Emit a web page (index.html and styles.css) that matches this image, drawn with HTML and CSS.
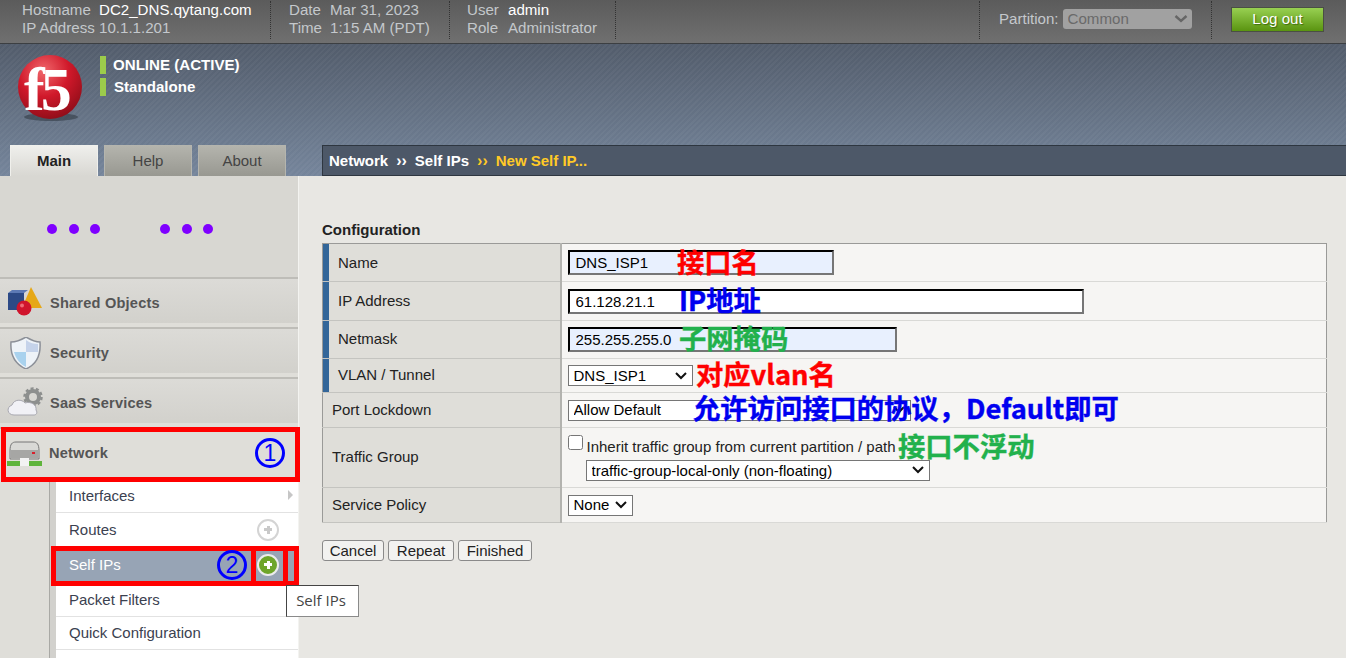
FILE: index.html
```html
<!DOCTYPE html>
<html>
<head>
    <meta charset="UTF-8">
    <title>Network » Self IPs » New Self IP...</title>
    <link rel="stylesheet" href="styles.css">
</head>
<body>
<div class="page">
    <div class="topbar">
        <div class="info info-host">
            <span>Hostname</span><b>DC2_DNS.qytang.com</b>
            <span>IP Address</span><span>10.1.1.201</span>
        </div>
        <div class="info info-date">
            <span>Date</span><span>Mar 31, 2023</span>
            <span>Time</span><span>1:15 AM (PDT)</span>
        </div>
        <div class="info info-user">
            <span>User</span><b>admin</b>
            <span>Role</span><span>Administrator</span>
        </div>
        <div class="top-spacer"></div>
        <div class="partition">
            <span>Partition:</span>
            <select class="partition-select" disabled><option>Common</option></select>
        </div>
        <div class="logout-wrap"><button class="logout">Log out</button></div>
    </div>

    <div class="banner">
        <div class="banner-top">
            <svg class="logo" width="72" height="72" viewBox="0 0 72 72">
                <defs>
                    <radialGradient id="ball" cx="40%" cy="25%" r="80%">
                        <stop offset="0" stop-color="#f0676b"/>
                        <stop offset=".5" stop-color="#d0182a"/>
                        <stop offset="1" stop-color="#8c0d18"/>
                    </radialGradient>
                </defs>
                <ellipse cx="33" cy="62" rx="27" ry="4" fill="#2e3640" opacity=".55"/>
                <circle cx="32" cy="32" r="32" fill="url(#ball)"/>
                <text class="logo-text" x="6" y="55">f5</text>
            </svg>
            <div class="status">
                <div class="status-line">ONLINE (ACTIVE)</div>
                <div class="status-line status-mode">Standalone</div>
            </div>
        </div>
        <div class="banner-nav">
            <div class="tab tab-on">Main</div>
            <div class="tab">Help</div>
            <div class="tab">About</div>
            <div class="crumbs">Network<i>››</i>Self IPs<i class="crumb-now">››</i><span class="crumb-now">New Self IP...</span></div>
        </div>
    </div>

    <div class="main">
        <div class="side">
            <div class="dots">
                <i></i><i></i><i></i><i></i><i></i><i></i>
            </div>
            <div class="sect">
                <svg class="sect-icon" width="36" height="32" viewBox="0 0 36 32">
                    <polygon points="24,0 35,21 15,21" fill="#e6a817"/>
                    <rect x="1" y="6" width="16" height="17" fill="#2d4a86"/>
                    <polygon points="1,6 5,3 21,3 17,6" fill="#5d7ab5"/>
                    <circle cx="17" cy="21" r="7.5" fill="#d0142c"/>
                    <circle cx="15" cy="18.5" r="2" fill="#ee6a76"/>
                </svg>
                <span>Shared Objects</span>
            </div>
            <div class="sect">
                <svg class="sect-icon" width="36" height="32" viewBox="0 0 36 32">
                    <path d="M19 0 C24 3 28 5 33 5 C34 18 30 27 19 32 C8 27 3 18 4 5 C9 5 14 3 19 0Z" fill="#eef3f8" stroke="#8c9098" stroke-width="1.5"/>
                    <path d="M19 3 L19 15 L31 15 C31 12 31 10 31 7 C27 7 23 6 19 3Z" fill="#c5d3ea"/>
                    <path d="M19 15 L7 15 C9 22 13 27 19 30Z" fill="#a9d2ee"/>
                </svg>
                <span>Security</span>
            </div>
            <div class="sect">
                <svg class="sect-icon" width="36" height="32" viewBox="0 0 36 32">
                    <circle cx="26" cy="10" r="6" fill="none" stroke="#8d8f8e" stroke-width="4"/>
                    <circle cx="26" cy="10" r="8.5" fill="none" stroke="#8d8f8e" stroke-width="2.5" stroke-dasharray="3 2.34"/>
                    <path d="M7 28 C0 28 -1 20 5 18 C7 12 15 12 18 16 C24 14 30 18 29 23 C31 26 29 28 27 28Z" fill="#f1f1f6" stroke="#a8a8b0"/>
                </svg>
                <span>SaaS Services</span>
            </div>
            <div class="sect sect-on">
                <svg class="sect-icon" width="35" height="32" viewBox="0 0 35 32">
                    <path d="M3 14 C3 7 5 5 9 5 H26 C30 5 32 7 32 14 V22 H3Z" fill="#d9d9d6" stroke="#777"/>
                    <rect x="4" y="13" width="27" height="8" fill="#a6a6a4"/>
                    <rect x="25" y="15" width="3" height="2" fill="#d8202c"/>
                    <rect x="0" y="24" width="35" height="5" fill="#5fb43c"/>
                    <rect x="13" y="21" width="9" height="8" fill="#f2f2f2"/>
                </svg>
                <span>Network</span>
            </div>
            <div class="sub">
                <div class="sub-list">
                    <div class="sub-item sub-first">Interfaces<i class="sub-arrow"></i></div>
                    <div class="sub-item sub-routes">Routes<i class="plus"></i></div>
                    <div class="sub-item sub-on">Self IPs<i class="plus plus-on"></i></div>
                    <div class="sub-item sub-packet">Packet Filters</div>
                    <div class="sub-item sub-quick">Quick Configuration</div>
                </div>
            </div>
        </div>

        <div class="content">
            <div class="cfg-title">Configuration</div>
            <table class="cfg">
                <tr class="row-name">
                    <td class="lbl lbl-req">Name</td>
                    <td><input class="field field-name" type="text" value="DNS_ISP1"></td>
                </tr>
                <tr class="row-ip">
                    <td class="lbl lbl-req">IP Address</td>
                    <td><input class="field field-ip" type="text" value="61.128.21.1"></td>
                </tr>
                <tr class="row-mask">
                    <td class="lbl lbl-req">Netmask</td>
                    <td><input class="field field-mask" type="text" value="255.255.255.0"></td>
                </tr>
                <tr class="row-vlan">
                    <td class="lbl lbl-req">VLAN / Tunnel</td>
                    <td><select class="pick pick-vlan"><option>DNS_ISP1</option></select></td>
                </tr>
                <tr class="row-port">
                    <td class="lbl">Port Lockdown</td>
                    <td><select class="pick pick-port"><option>Allow Default</option></select></td>
                </tr>
                <tr class="row-group">
                    <td class="lbl">Traffic Group</td>
                    <td>
                        <label class="inherit"><input class="check" type="checkbox"><span>Inherit traffic group from current partition / path</span></label>
                        <select class="pick pick-group"><option>traffic-group-local-only (non-floating)</option></select>
                    </td>
                </tr>
                <tr class="row-policy">
                    <td class="lbl">Service Policy</td>
                    <td><select class="pick pick-policy"><option>None</option></select></td>
                </tr>
            </table>
            <div class="actions">
                <button class="btn btn-cancel">Cancel</button>
                <button class="btn btn-repeat">Repeat</button>
                <button class="btn btn-finished">Finished</button>
            </div>
        </div>
    </div>

    <!-- things drawn on top of the screenshot -->
    <div class="mark mark-network"></div>
    <div class="mark mark-selfip"></div>
    <div class="mark-bar mark-bar-a"></div>
    <div class="mark-bar mark-bar-b"></div>
    <div class="num num-1">1</div>
    <div class="num num-2">2</div>
    <div class="tooltip">Self IPs</div>
    <div class="note red note-name">接口名</div>
    <div class="note blue note-ip">IP地址</div>
    <div class="note green note-mask">子网掩码</div>
    <div class="note red note-vlan">对应vlan名</div>
    <div class="note blue note-port">允许访问接口的协议，Default即可</div>
    <div class="note green note-group">接口不浮动</div>
</div>
</body>
</html>
```

FILE: styles.css
```css
* {
    box-sizing: border-box;
}

html, body {
    margin: 0;
    height: 100%;
    overflow: hidden;
}

body {
    font-family: "Liberation Sans", Arial, sans-serif;
    font-size: 15px;
    color: #222;
    background-color: #e8e7e3;
}

.page {
    position: relative;
    width: 1346px;
    height: 658px;
    overflow: hidden;
}

/* top bar */
.topbar {
    display: flex;
    height: 44px;
    padding-top: 1px;
    background: linear-gradient(to bottom, #5b5b5b, #707070);
    border-bottom: 1px solid #3c3f42;
    color: #c4c8cc;
    font-size: 15.1px;
}

.info {
    display: grid;
    grid-template-rows: 18px 18px;
    align-content: start;
    height: 38px;
    border-right: 1px dotted #333;
    line-height: 18px;
}

.info b {
    font-weight: normal;
    color: #fff;
}

.info-host {
    grid-template-columns: 77px auto;
    width: 271px;
    padding-left: 22px;
}

.info-date {
    grid-template-columns: 41px auto;
    width: 179px;
    padding-left: 18px;
}

.info-user {
    grid-template-columns: 41px auto;
    width: 166px;
    padding-left: 17px;
}

.top-spacer {
    width: 364px;
    height: 38px;
    border-right: 1px dotted #333;
}

.partition {
    display: flex;
    align-items: center;
    gap: 4px;
    width: 232px;
    height: 38px;
    padding: 0 0 3px 19px;
    border-right: 1px dotted #333;
}

.partition-select {
    width: 129px;
    height: 20px;
    padding: 0 0 0 5px;
    border: 0;
    border-radius: 3px;
    appearance: none;
    background: #a1a1a1 url("data:image/svg+xml,%3Csvg xmlns='http://www.w3.org/2000/svg' width='14' height='8'%3E%3Cpath d='M1.5 1l5.5 5 5.5-5' fill='none' stroke='%23666' stroke-width='2.4'/%3E%3C/svg%3E") no-repeat right 4px center;
    color: #6a6a6a;
    font-family: inherit;
    font-size: 15.1px;
    opacity: 1;
}

.logout-wrap {
    padding: 6px 0 0 19px;
}

.logout {
    display: block;
    width: 93px;
    height: 25px;
    padding: 0 0 3px;
    border: 1px solid #4a4f44;
    background: linear-gradient(to bottom, #98d052, #5a9410);
    color: #fff;
    font-family: inherit;
    font-size: 15.1px;
    text-shadow: 1px 1px 1px #3f6a10;
}

/* banner */
.banner {
    display: flex;
    flex-direction: column;
    justify-content: space-between;
    height: 132px;
    background:
        repeating-linear-gradient(135deg, rgba(255,255,255,.035) 0 2px, transparent 2px 4px),
        linear-gradient(to bottom, #525c6b, #75859b);
}

.banner-top {
    display: flex;
    padding: 11px 0 0 18px;
}

.logo {
    display: block;
    flex: none;
    width: 72px;
}

.logo-text {
    font-family: "Liberation Serif", serif;
    font-size: 62px;
    font-weight: bold;
    fill: #fff;
    letter-spacing: -4px;
}

.status {
    margin-left: 10px;
    padding-top: 1px;
}

.status-line {
    height: 18px;
    margin-bottom: 4px;
    padding-left: 7px;
    border-left: 6px solid #9ccb4b;
    color: #fff;
    font-size: 15.1px;
    font-weight: bold;
    line-height: 18px;
}

.status-mode {
    padding-left: 8px;
}

.banner-nav {
    display: flex;
    height: 31px;
    padding-left: 10px;
}

.tab {
    width: 88px;
    margin-right: 6px;
    border: 1px solid #b5b5ae;
    border-bottom: 0;
    background: linear-gradient(to bottom, #b4b4ad, #989891);
    color: #444;
    font-size: 15px;
    line-height: 30px;
    text-align: center;
}

.tab-on {
    border-color: #f0f0ec;
    background: linear-gradient(to bottom, #efefec, #d8d7d2);
    color: #222;
    font-weight: bold;
}

.crumbs {
    flex: 1;
    margin-left: 30px;
    padding-left: 6px;
    border: 1px solid #2e3640;
    border-right: 0;
    background-color: #4d5868;
    color: #fff;
    font-size: 15px;
    font-weight: bold;
    line-height: 30px;
}

.crumbs i {
    margin: 0 8px;
    font-style: normal;
    font-size: 16px;
}

.crumbs .crumb-now {
    color: #ffc926;
}

/* left side */
.main {
    display: flex;
    height: 482px;
}

.side {
    flex: none;
    width: 299px;
    background-color: #d8d7d2;
    border-right: 1px solid #f3f3f0;
}

.dots {
    display: flex;
    align-items: center;
    gap: 11.5px;
    height: 101px;
    padding: 5px 0 0 47px;
}

.dots i {
    width: 10px;
    height: 10px;
    border-radius: 50%;
    background-color: #7f00ff;
}

.dots i:nth-child(3) {
    margin-right: 48.5px;
}

.sect {
    display: flex;
    align-items: center;
    height: 50px;
    padding-left: 7px;
    border-top: 2px solid #bebdb8;
    background: linear-gradient(to bottom, #dcdbd7, #d2d1cc 92%, #dfded9 92%);
    color: #555;
    font-size: 14.6px;
    font-weight: bold;
    letter-spacing: .2px;
}

.sect-icon {
    flex: none;
    margin-right: 7px;
}

.sect-on {
    height: 54px;
    padding-bottom: 4px;
    background: #dfded9;
}

.sub {
    height: 178px;
    padding-left: 49px;
    background-color: #dfded9;
}

.sub-list {
    height: 100%;
    margin-top: -1px;
    padding-left: 6px;
    border-left: 1px solid #a9a9a5;
    background: linear-gradient(to right, #d2d1cd 6px, #fff 6px);
}

.sub-item {
    display: flex;
    align-items: center;
    justify-content: space-between;
    height: 33px;
    padding: 0 5px 0 13px;
    border-bottom: 1px solid #e2e2e2;
    color: #3b4150;
}

.sub-first, .sub-quick {
    padding-bottom: 2px;
}

.sub-routes {
    height: 34px;
    padding-right: 19px;
}

.sub-on {
    height: 36px;
    padding-right: 19px;
    background-color: #97a4b5;
    color: #fff;
}

.sub-packet {
    height: 34px;
}

.sub-arrow {
    width: 0;
    height: 0;
    border-left: 5px solid #c6c6c6;
    border-top: 5px solid transparent;
    border-bottom: 5px solid transparent;
}

.plus {
    position: relative;
    width: 22px;
    height: 22px;
    border: 2px solid #d4d4d4;
    border-radius: 50%;
    background-color: #fff;
}

.plus::before, .plus::after {
    content: "";
    position: absolute;
    background-color: #c9c9c9;
}

.plus::before {
    left: 5px;
    top: 7.5px;
    width: 8px;
    height: 3px;
}

.plus::after {
    left: 7.5px;
    top: 5px;
    width: 3px;
    height: 8px;
}

.plus-on {
    border-color: #ececec;
    background-color: #6ea52a;
}

.plus-on::before, .plus-on::after {
    background-color: #fff;
}

/* config form */
.content {
    flex: 1;
    padding: 45px 19px 0 23px;
    background-color: #e8e7e3;
}

.cfg-title {
    height: 22px;
    color: #222;
    font-weight: bold;
    line-height: 18px;
}

.cfg {
    width: 1005px;
    border-collapse: collapse;
    table-layout: fixed;
    border: 1px solid #9a9a98;
}

.cfg td {
    padding: 0 0 0 6px;
    background-color: #f6f5f3;
    border-bottom: 1px solid #d9d9d6;
    vertical-align: middle;
}

.cfg .lbl {
    width: 238px;
    padding: 0 0 2px 9px;
    background-color: #dfded9;
    border-right: 2px solid #b3b3af;
    border-bottom-color: #c4c4c0;
}

.cfg .lbl-req {
    padding-left: 15px;
    box-shadow: inset 6px 0 0 #336699;
}

.row-name .lbl {
    padding-bottom: 0;
}

.row-name { height: 38px; }
.row-ip { height: 39px; }
.row-mask { height: 38px; }
.row-vlan { height: 34px; }
.row-port { height: 35px; }
.row-group { height: 60px; }
.row-policy { height: 35px; }

.field {
    display: block;
    height: 25px;
    padding: 1px 6px;
    border: 2px inset #767676;
    border-color: #222 #767676 #767676 #222;
    background-color: #e8f0fe;
    color: #000;
    font-family: inherit;
    font-size: 15px;
}

.field-name { width: 266px; }
.field-ip { width: 516px; background-color: #fff; }
.field-mask { width: 329px; }

.pick {
    display: block;
    height: 21px;
    padding: 0 0 0 5px;
    border: 1px solid #767676;
    appearance: none;
    background: #fff url("data:image/svg+xml,%3Csvg xmlns='http://www.w3.org/2000/svg' width='12' height='8'%3E%3Cpath d='M1 1l5 5 5-5' fill='none' stroke='%23111' stroke-width='2'/%3E%3C/svg%3E") no-repeat right 5px center;
    color: #000;
    font-family: inherit;
    font-size: 15px;
}

.pick-vlan { width: 125px; }
.pick-port { width: 343px; padding-bottom: 2px; }
.pick-group { width: 344px; margin: 5px 0 0 18px; }
.pick-policy { width: 65px; padding-bottom: 2px; }

.inherit {
    display: flex;
    align-items: flex-start;
    color: #222;
    line-height: 16px;
}

.inherit span {
    margin-top: 4px;
}

.check {
    width: 15px;
    height: 15px;
    margin: 0 4px 0 0;
}

.actions {
    display: flex;
    gap: 4px;
    margin-top: 17px;
}

.btn {
    height: 21px;
    padding: 0;
    border: 1px solid #8a8a8a;
    border-radius: 3px;
    background-color: #f2f2f0;
    color: #222;
    font-family: inherit;
    font-size: 15px;
}

.btn-cancel { width: 62px; }
.btn-repeat { width: 66px; }
.btn-finished { width: 74px; }

/* annotations over the page */
.mark {
    position: absolute;
    border: 5px solid #ff0000;
}

.mark-network {
    left: 1px;
    top: 427px;
    width: 299px;
    height: 55px;
}

.mark-selfip {
    left: 51px;
    top: 546px;
    width: 248px;
    height: 40px;
}

.mark-bar {
    position: absolute;
    top: 546px;
    width: 5px;
    height: 40px;
    background-color: #ff0000;
}

.mark-bar-a { left: 251px; }
.mark-bar-b { left: 283px; }

.num {
    position: absolute;
    width: 30px;
    height: 30px;
    border: 3px solid #0000ff;
    border-radius: 50%;
    color: #0000ff;
    font-size: 23px;
    line-height: 24px;
    text-align: center;
}

.num-1 { left: 255px; top: 438px; }
.num-2 { left: 217px; top: 550px; }

.tooltip {
    position: absolute;
    left: 286px;
    top: 585px;
    width: 73px;
    height: 32px;
    padding-right: 3px;
    border: 1px solid #8a8a8a;
    border-top-color: #444;
    border-left-color: #444;
    background-color: #fff;
    color: #444;
    font-family: "Open Sans", sans-serif;
    font-size: 15px;
    line-height: 29px;
    text-align: center;
}

.note {
    position: absolute;
    font-family: "Noto Sans CJK SC", sans-serif;
    font-size: 27.3px;
    font-weight: bold;
    line-height: 26px;
    white-space: nowrap;
    -webkit-text-stroke: .4px currentColor;
}

.red { color: #ff0000; }
.blue { color: #0000f0; }
.green { color: #22b14c; }

.note-name { left: 677px; top: 248px; }
.note-ip { left: 679px; top: 286px; }
.note-mask { left: 679px; top: 324px; }
.note-vlan { left: 696px; top: 360px; }
.note-port { left: 693px; top: 394px; }
.note-group { left: 898px; top: 432px; }
```
